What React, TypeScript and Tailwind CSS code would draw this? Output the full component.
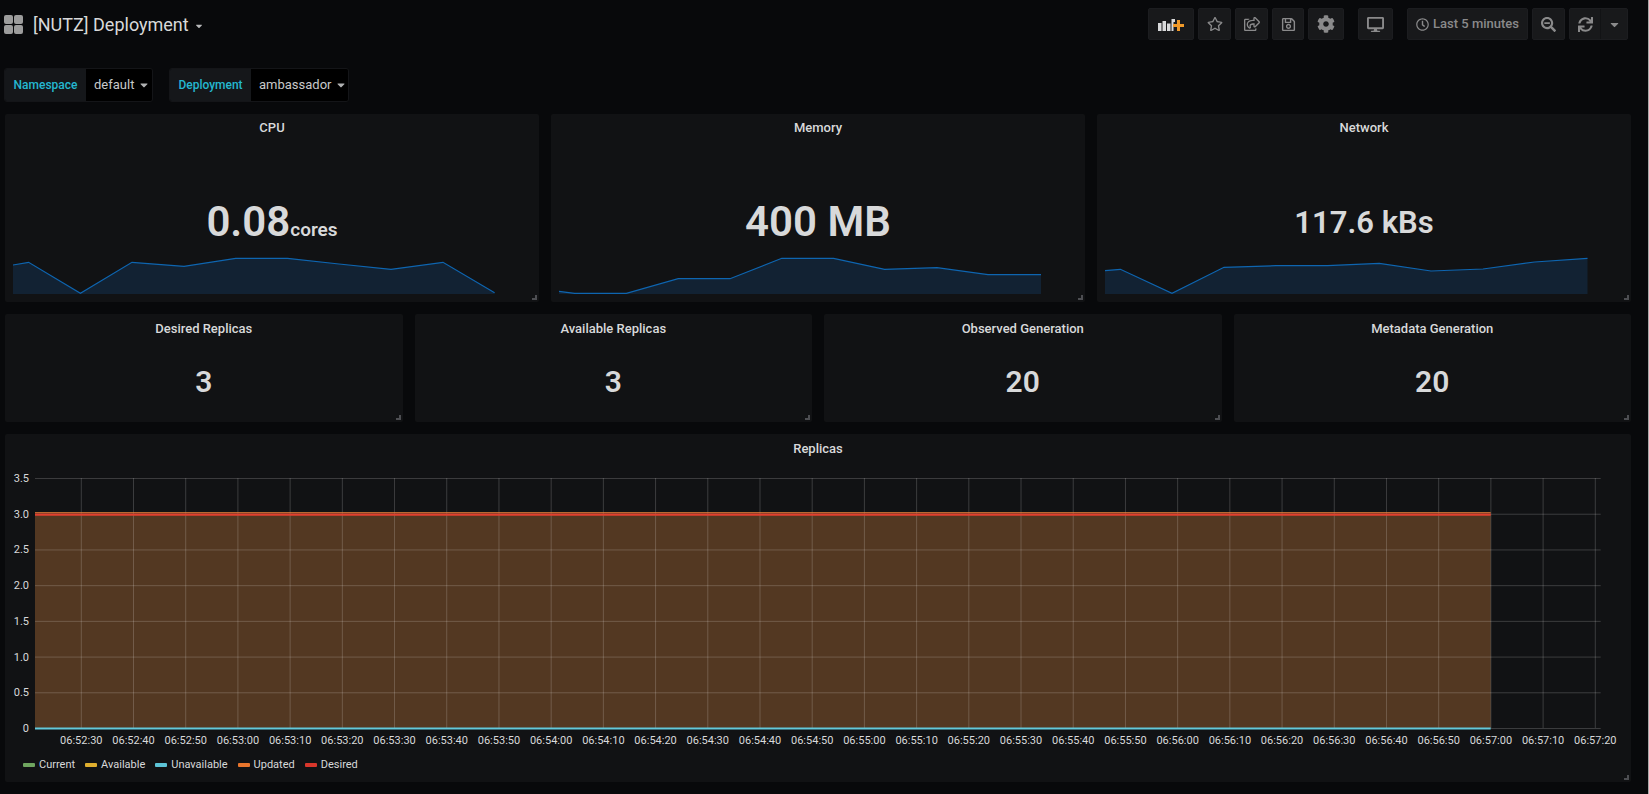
import React from "react";
import {
  FaCaretDown,
  FaCog,
  FaDesktop,
  FaRegClock,
  FaRegSave,
  FaRegShareSquare,
  FaRegStar,
  FaSearchMinus,
  FaSync,
} from "react-icons/fa";

const FONT = "font-['Roboto','Liberation_Sans',sans-serif]";

// sparkline points, x from the panel's left edge, y from the top of the svg
const cpuLine = [
  [8, 9], [23.6, 6.3], [75.4, 37.3], [127, 6.3], [179, 10.3], [230.7, 2.3],
  [282.5, 2.3], [334, 8], [386, 13.3], [438, 6.3], [489.6, 36.7],
];
const memoryLine = [
  [8, 35.3], [23.6, 37.3], [75.4, 37.3], [127.2, 22.7], [179, 22.7], [230.8, 2.3],
  [282.6, 2.3], [333.6, 13.3], [386, 11.7], [437, 18.7], [490, 18.7],
];
const networkLine = [
  [8, 14.7], [23.4, 13.3], [75, 37.3], [127, 11.3], [178.7, 9.7], [230.5, 9.7],
  [282.3, 7.3], [334, 15], [386, 13], [437.6, 6], [490.5, 2.3],
];

const ResizeHandle = () => (
  <svg width="5" height="5" viewBox="0 0 5 5" className="absolute right-[2px] bottom-[2px]">
    <path d="M4 0v5M0 4h5" stroke="#4d4e52" strokeWidth="2" fill="none" />
  </svg>
);

const Sparkline = ({ points }: { points: number[][] }) => {
  const line = points.map((p) => p.join(",")).join(" ");
  const first = points[0][0];
  const last = points[points.length - 1][0];
  return (
    <svg width="534" height="40" viewBox="0 0 534 40" className="block">
      <polygon points={`${first},38 ${line} ${last},38`} fill="#122233" />
      <polyline points={line} fill="none" stroke="#0e65b0" strokeWidth="1.2" />
    </svg>
  );
};

const StatPanel = ({
  title,
  children,
  points,
}: {
  title: string;
  children: React.ReactNode;
  points: number[][];
}) => (
  <div className="relative h-[188px] rounded-[2px] bg-[#111214]">
    <div className="flex h-[27px] items-center justify-center text-[13px] font-medium text-[#d8d9da]">
      {title}
    </div>
    <div className="flex h-[115px] items-center justify-center pt-[47px] font-semibold text-[#d8d9da]">
      {children}
    </div>
    <Sparkline points={points} />
    <ResizeHandle />
  </div>
);

const SmallPanel = ({ title, value }: { title: string; value: string }) => (
  <div className="relative h-[108px] rounded-[2px] bg-[#111214]">
    <div className="flex h-[29px] items-center justify-center text-[13px] font-medium text-[#d8d9da]">
      {title}
    </div>
    <div className="flex h-[76px] items-center justify-center text-[30px] font-semibold text-[#d8d9da]">
      {value}
    </div>
    <ResizeHandle />
  </div>
);

const NavButton = ({ className, children }: { className: string; children: React.ReactNode }) => (
  <div
    className={`flex h-[32px] items-center justify-center rounded-[2px] border border-[#1c1d20] bg-[#18191b] text-[#8a8a8b] ${className}`}
  >
    {children}
  </div>
);

const VarPicker = ({ label, value, valueWidth }: { label: string; value: string; valueWidth: string }) => (
  <div className="flex h-[34px] overflow-hidden rounded-[3px] border border-[#141518]">
    <div className="flex w-[81px] items-center justify-center bg-[#15171a] text-[12px] font-medium text-[#24b8d0]">
      {label}
    </div>
    <div className={`flex items-center gap-[4px] bg-[#000] pl-[8px] text-[13px] text-[#c8c9ca] ${valueWidth}`}>
      {value}
      <FaCaretDown size={12} className="text-[#b0b1b2]" />
    </div>
  </div>
);

const ReplicasChart = () => {
  const ticks = Array.from({ length: 30 }, (_, i) => {
    const total = 6 * 3600 + 52 * 60 + 30 + i * 10;
    const m = Math.floor(total / 60) % 60;
    const s = total % 60;
    return {
      x: 76.3 + i * 52.207,
      label: `06:${String(m).padStart(2, "0")}:${String(s).padStart(2, "0")}`,
    };
  });
  const rows = ["0", "0.5", "1.0", "1.5", "2.0", "2.5", "3.0", "3.5"];
  const rowY = (i: number) => 263 - i * 35.71;
  const fontFamily = "Roboto, 'Liberation Sans', sans-serif";
  return (
    <svg width="1626" height="285" viewBox="0 0 1626 285" className="block">
      <rect x="30" y={rowY(6)} width="1455.7" height={rowY(0) - rowY(6)} fill="#533822" />
      {rows.map((r, i) => (
        <g key={r}>
          <line x1="30" x2="1595.7" y1={rowY(i) + 0.5} y2={rowY(i) + 0.5} stroke="#fff" strokeOpacity="0.18" />
          <text
            x="24"
            y={rowY(i) + 4}
            textAnchor="end"
            fontSize="11"
            fill="#d8d9da"
            fontFamily={fontFamily}
          >
            {r}
          </text>
        </g>
      ))}
      {ticks.map((t) => (
        <g key={t.label}>
          <line x1={t.x} x2={t.x} y1={rowY(7)} y2={rowY(0)} stroke="#fff" strokeOpacity="0.18" />
          <text
            x={t.x}
            y="279"
            textAnchor="middle"
            fontSize="11"
            fill="#d8d9da"
            fontFamily={fontFamily}
          >
            {t.label}
          </text>
        </g>
      ))}
      <line x1="30" x2="1485.7" y1={rowY(6) - 1} y2={rowY(6) - 1} stroke="#ef843c" strokeWidth="1" />
      <line x1="30" x2="1485.7" y1={rowY(6) + 0.8} y2={rowY(6) + 0.8} stroke="#e2402f" strokeWidth="2.2" />
      <line x1="30" x2="1485.7" y1={rowY(0) + 0.5} y2={rowY(0) + 0.5} stroke="#62c8da" strokeWidth="2.2" />
    </svg>
  );
};

const legend = [
  { name: "Current", color: "bg-[#6fa55f]" },
  { name: "Available", color: "bg-[#dfae2e]" },
  { name: "Unavailable", color: "bg-[#5cc3d6]" },
  { name: "Updated", color: "bg-[#e8752c]" },
  { name: "Desired", color: "bg-[#d8362b]" },
];

const App = () => {
  return (
    <div className={`flex h-[794px] w-full overflow-hidden bg-[#08090b] ${FONT}`}>
      <div className="min-w-0 flex-1 pr-[17px] pl-[5px]">
        {/* top nav */}
        <div className="flex h-[68px] items-start pt-[8px]">
          <div className="flex h-[32px] items-center">
            <div className="-ml-[1px] grid grid-cols-2 gap-[1px]">
              <span className="h-[9px] w-[9px] rounded-[2px] bg-[#9c9c9c]" />
              <span className="h-[9px] w-[9px] rounded-[2px] bg-[#9c9c9c]" />
              <span className="h-[9px] w-[9px] rounded-[2px] bg-[#9c9c9c]" />
              <span className="h-[9px] w-[9px] rounded-[2px] bg-[#9c9c9c]" />
            </div>
            <span className="ml-[10px] text-[18px] text-[#d8d9da]">[NUTZ] Deployment</span>
            <FaCaretDown size={10} className="mt-[4px] ml-[5px] text-[#b9babb]" />
          </div>
          <div className="mr-[3px] ml-auto flex">
            <NavButton className="w-[46px]">
              <svg width="26" height="14" viewBox="0 0 26 14">
                <path
                  d="M0 6h3.500v8H0zM4.500 4h3.500v10H4.500zM9 6.500h3.500V14H9zM13.500 2h3.500v3h-1.500v9h-2z"
                  fill="#d8d9da"
                />
                <path d="M19 3h3v4h4v3h-4v4h-3v-4h-4V7h4z" fill="#f09a2a" />
              </svg>
            </NavButton>
            <NavButton className="ml-[4px] w-[33px]">
              <FaRegStar size={16} />
            </NavButton>
            <NavButton className="ml-[4px] w-[33px]">
              <FaRegShareSquare size={16} />
            </NavButton>
            <NavButton className="ml-[4px] w-[32px]">
              <FaRegSave size={15} />
            </NavButton>
            <NavButton className="ml-[4px] w-[36px]">
              <FaCog size={18} />
            </NavButton>
            <NavButton className="ml-[14px] w-[35px]">
              <FaDesktop size={17} />
            </NavButton>
            <NavButton className="ml-[14px] w-[121px] gap-[4px] text-[13px] font-medium">
              <FaRegClock size={13} />
              Last 5 minutes
            </NavButton>
            <NavButton className="ml-[4px] w-[33px]">
              <FaSearchMinus size={15} />
            </NavButton>
            <NavButton className="ml-[4px] w-[59px]">
              <div className="flex h-full w-[31px] items-center justify-center border-r border-[#121315]">
                <FaSync size={15} />
              </div>
              <div className="flex flex-1 items-center justify-center">
                <FaCaretDown size={13} />
              </div>
            </NavButton>
          </div>
        </div>

        {/* template variables */}
        <div className="-ml-[1px] mb-[12px] flex gap-[16px]">
          <VarPicker label="Namespace" value="default" valueWidth="w-[66px]" />
          <VarPicker label="Deployment" value="ambassador" valueWidth="w-[97px]" />
        </div>

        <div className="mb-[12px] grid grid-cols-3 gap-3">
          <StatPanel title="CPU" points={cpuLine}>
            <span className="text-[42px] leading-none">
              0.08<span className="text-[19px]">cores</span>
            </span>
          </StatPanel>
          <StatPanel title="Memory" points={memoryLine}>
            <span className="text-[42px] leading-none">400 MB</span>
          </StatPanel>
          <StatPanel title="Network" points={networkLine}>
            <span className="text-[31px] leading-none">117.6 kBs</span>
          </StatPanel>
        </div>

        <div className="mb-[12px] grid grid-cols-4 gap-3">
          <SmallPanel title="Desired Replicas" value="3" />
          <SmallPanel title="Available Replicas" value="3" />
          <SmallPanel title="Observed Generation" value="20" />
          <SmallPanel title="Metadata Generation" value="20" />
        </div>

        <div className="relative h-[348px] rounded-[2px] bg-[#111214]">
          <div className="mb-[2px] flex h-[29px] items-center justify-center text-[13px] font-medium text-[#d8d9da]">
            Replicas
          </div>
          <ReplicasChart />
          <div className="mt-[7px] flex pl-[18px] text-[11px] leading-[16px] text-[#d8d9da]">
            {legend.map((item) => (
              <div key={item.name} className="mr-[10px] flex items-center gap-[4px]">
                <span className={`h-[4px] w-[12px] rounded-[1px] ${item.color}`} />
                {item.name}
              </div>
            ))}
          </div>
          <ResizeHandle />
        </div>
      </div>
      <div className="w-px bg-[#a9a9a9]" />
    </div>
  );
};

export default App;
